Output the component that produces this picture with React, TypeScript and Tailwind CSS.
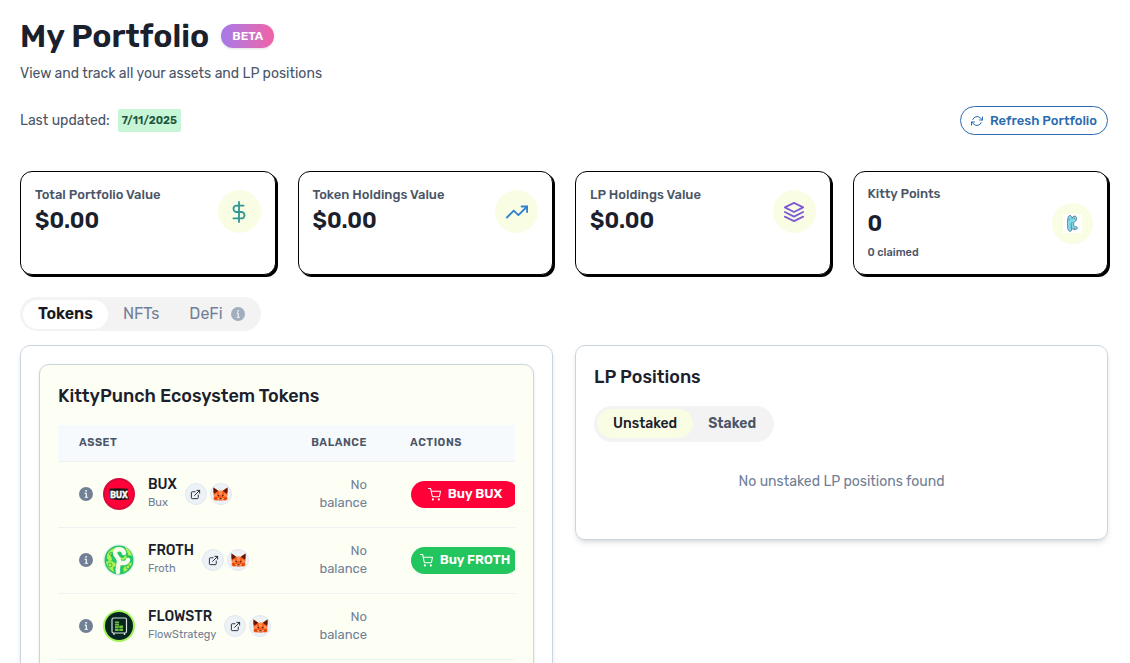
import { useState } from "react";
import type { ReactNode } from "react";
import {
  FiDollarSign,
  FiExternalLink,
  FiLayers,
  FiRefreshCw,
  FiShoppingCart,
  FiTrendingUp,
} from "react-icons/fi";

type Token = {
  symbol: string;
  name: string;
  logo: ReactNode;
  buyClass?: string;
};

type StatProps = {
  label: string;
  value: string;
  children: ReactNode;
};

function InfoIcon({ className }: { className: string }) {
  return (
    <svg viewBox="0 0 24 24" className={className} aria-hidden="true">
      <path
        fill="currentColor"
        d="M12,0A12,12,0,1,0,24,12,12.013,12.013,0,0,0,12,0Zm.25,5a1.5,1.5,0,1,1-1.5,1.5A1.5,1.5,0,0,1,12.25,5ZM14.5,18.5h-4a1,1,0,0,1,0-2h.75a.25.25,0,0,0,.25-.25v-4.5a.25.25,0,0,0-.25-.25H10.5a1,1,0,0,1,0-2h1a2,2,0,0,1,2,2v4.75a.25.25,0,0,0,.25.25h.75a1,1,0,1,1,0,2Z"
      />
    </svg>
  );
}

function FoxIcon() {
  return (
    <svg viewBox="0 0 32 30" className="w-[15px] shrink-0" aria-hidden="true">
      <path fill="#ff5c16" d="M1 1l10 7h10l10-7v14l-1 5 1 6-5 3-6-1-2 2h-4l-2-2-6 1-5-3 1-6-1-5z" />
      <path fill="#661800" d="M1 1l10 7-4 3-4 3-2-3zM31 1L21 8l4 3 4 3 2-3z" />
      <path fill="#ff8d5d" d="M12 8h8l-1 9h-6zM2 17l6-4 3 7-9 1zM30 17l-6-4-3 7 9 1z" />
      <path fill="#e34807" d="M2 22h9l1 4-8 2zM30 22h-9l-1 4 8 2z" />
      <path fill="#33180c" d="M9 16l4 2-1 2-2-1zM23 16l-4 2 1 2 2-1zM15 24h2l1 2h-4z" />
      <path fill="#f3e4de" d="M9 23l3 1v3l-2-1zM23 23l-3 1v3l2-1zM13 27h6l-1 2h-4z" />
    </svg>
  );
}

function KittyIcon() {
  return (
    <svg viewBox="0 0 19 19" className="size-[19px]" aria-hidden="true">
      <path fill="#fff" d="M0 0h19v19H0z" />
      <path
        fill="#7fd8ec"
        stroke="#52707d"
        strokeWidth=".8"
        d="M7.200 1.500C5.200 1.300 4.500 4 4.500 9.500S5 17.500 7.400 17.300C9 17 8.600 15.500 8.600 14c1.200 1.400 2.600 1.800 4.300 1.400 1.600-.4 2-1.800.8-2.600-1.800.2-3.200-.8-3.200-2.800.2-2.400 3.300-2.900 3.200-5.600-.1-1.700-1.400-2.700-2.700-2.300-1.100.3-1.500 1.400-2 2.300C8.900 3 8.600 1.700 7.200 1.500z"
      />
      <path fill="none" stroke="#52707d" strokeWidth=".7" d="M5.500 5l1.500 1M8.300 14V9.500L9.500 8M10.500 14l1.500.5M10.500 4l1.500.7" />
    </svg>
  );
}

function BuxLogo() {
  return (
    <svg viewBox="0 0 32 32" className="size-8" aria-hidden="true">
      <circle cx="16" cy="16" r="16" fill="#d5093b" />
      <circle cx="16" cy="16" r="14" fill="#ff0038" />
      <path fill="#22151a" d="M6.500 10.800l8-.6 10.500.6-.6 4 1.600 6.400-9 1-9.700-1.200z" />
      <text
        x="16"
        y="19.500"
        textAnchor="middle"
        fill="#fff"
        stroke="#fff"
        strokeWidth=".4"
        className="font-['Roboto',sans-serif] text-[9px] font-bold"
      >
        BUX
      </text>
    </svg>
  );
}

function FrothLogo() {
  return (
    <svg viewBox="0 0 32 32" className="size-8" aria-hidden="true">
      <circle cx="16" cy="16" r="16" fill="#e8f3f1" />
      <circle cx="16" cy="16" r="14.500" fill="#25c667" />
      <g fill="#aef24f">
        <path d="M4 12c1-4 4-7 8-8l-1 3c-3 1-3 4-3 7l-4 1z" />
        <path d="M3 18c3-2 7-1 9 1s0 4-2 4l1 5c-4-2-7-5-8-10z" />
        <path d="M22 3c4 2 6 5 7 9l-4-1c0-3-2-4-3-8z" />
        <path d="M22 22l7-4c-1 5-4 8-8 10-1-2-1-4 1-6z" />
        <path d="M16 13l4 1 3-3 1 3-4 2-3-1z" />
        <circle cx="13" cy="5" r="1.800" />
        <circle cx="7" cy="15" r="2" />
      </g>
      <g fill="none" stroke="#25a95a" strokeWidth=".8">
        <circle cx="7" cy="21" r="2" />
        <circle cx="25" cy="23" r="2" />
        <circle cx="8" cy="10" r="1.500" />
      </g>
      <path
        fill="none"
        stroke="#f7fbe9"
        strokeWidth="4.500"
        strokeLinecap="round"
        strokeLinejoin="round"
        d="M21 9c-1-5-9-5-9 0 0 3 4 4 4 8s-2 6-1 11M16 18c4 2 8 1 9-2"
      />
    </svg>
  );
}

function FlowLogo() {
  return (
    <svg viewBox="0 0 32 32" className="size-8" aria-hidden="true">
      <circle cx="16" cy="16" r="16" fill="#a4f35a" />
      <circle cx="16" cy="16" r="14" fill="#06261f" />
      <rect x="9" y="8" width="14.500" height="15" rx="1.500" fill="none" stroke="#d8e0dc" strokeWidth="1.200" />
      <path stroke="#d8e0dc" strokeWidth="1.300" d="M11 23v2M21.500 23v2" />
      <path fill="#6fbf3f" d="M12 11.500h4v4h4v5.500h-8z" />
      <path stroke="#06261f" strokeWidth=".6" d="M12 13.500h4M12 15.800h5M12 18.500h9M16 17v4" />
    </svg>
  );
}

const tokens: Token[] = [
  { symbol: "BUX", name: "Bux", logo: <BuxLogo />, buyClass: "bg-[#ff0038]" },
  { symbol: "FROTH", name: "Froth", logo: <FrothLogo />, buyClass: "bg-[#22c55e]" },
  { symbol: "FLOWSTR", name: "FlowStrategy", logo: <FlowLogo /> },
];

function StatCard({ label, value, children }: StatProps) {
  return (
    <div className="flex items-start justify-between rounded-xl border border-black bg-white px-[14px] pt-[14px] pb-9 shadow-[2px_2px_0_#000]">
      <div>
        <p className="text-[13px] leading-[18px] font-medium text-[#4a5568]">{label}</p>
        <p className="text-[22px] leading-[34px] font-semibold text-[#1a202c]">{value}</p>
      </div>
      <div className="mt-1 flex size-[43px] items-center justify-center rounded-full bg-[#f8fde4]">
        {children}
      </div>
    </div>
  );
}

function TokenRow({ token }: { token: Token }) {
  return (
    <tr className="h-[66px] border-b border-[#edf2f7]">
      <td className="pl-[21px]">
        <div className="flex items-center">
          <InfoIcon className="mr-[10px] size-[14px] text-[#718096]" />
          <span className="mr-[13px] rounded-full">{token.logo}</span>
          <div className="mr-2">
            <p className="text-[14px] leading-[18px] font-medium text-[#1a202c]">{token.symbol}</p>
            <p className="text-[11px] leading-[18px] text-[#718096]">{token.name}</p>
          </div>
          <a
            href="#"
            aria-label={`Open ${token.name}`}
            className="mr-[3px] flex size-[22px] items-center justify-center rounded-full border border-[#e2e8f0] bg-[#edf2f7] text-[#1a202c]"
          >
            <FiExternalLink className="size-[11px]" />
          </a>
          <button
            aria-label={`Add ${token.symbol} to wallet`}
            className="flex size-[22px] items-center justify-center rounded-full border border-[#e2e8f0] bg-[#edf2f7]"
          >
            <FoxIcon />
          </button>
        </div>
      </td>
      <td className="px-[21px] text-right text-[13px] leading-[18px] text-[#718096]">No balance</td>
      <td className="pl-[23px]">
        {token.buyClass && (
          <button
            className={`${token.buyClass} flex h-[27px] w-[108px] items-center justify-center gap-[7px] rounded-full text-[13px] font-semibold text-white`}
          >
            <FiShoppingCart className="size-[13px]" />
            Buy {token.symbol}
          </button>
        )}
      </td>
    </tr>
  );
}

function App() {
  const [tab, setTab] = useState<string>("Tokens");
  const [lpTab, setLpTab] = useState<string>("Unstaked");

  return (
    <main className="bg-white pt-[14px] pr-[22px] pb-10 pl-5 font-['Rubik','Roboto',sans-serif] text-[#1a202c]">
      <header>
        <div className="flex items-center gap-3">
          <h1 className="text-[32px] leading-[44px] font-semibold">My Portfolio</h1>
          <span className="rounded-full bg-linear-to-r from-[#a578e8] to-[#f062a6] px-[11px] text-[12px] leading-6 font-semibold text-white shadow-sm">
            BETA
          </span>
        </div>
        <p className="mt-1 text-[14px] leading-6 text-[#4a5568]">
          View and track all your assets and LP positions
        </p>
      </header>

      <div className="mt-5 flex items-center justify-between">
        <p className="flex items-center gap-2 text-[14px] text-[#4a5568]">
          Last updated:
          <span className="rounded-xs bg-[#c6f6d5] px-1 text-[11px] leading-[23px] font-semibold text-[#22543d]">
            7/11/2025
          </span>
        </p>
        <button className="flex h-[29px] items-center gap-[7px] rounded-full border border-[#2b6cb0] px-[10px] text-[13px] font-medium text-[#2b6cb0]">
          <FiRefreshCw className="size-3" />
          Refresh Portfolio
        </button>
      </div>

      <section className="mt-9 grid grid-cols-4 gap-[22px]">
        <StatCard label="Total Portfolio Value" value="$0.00">
          <FiDollarSign className="size-[22px] text-[#319795]" />
        </StatCard>
        <StatCard label="Token Holdings Value" value="$0.00">
          <FiTrendingUp className="size-[22px] text-[#3182ce]" />
        </StatCard>
        <StatCard label="LP Holdings Value" value="$0.00">
          <FiLayers className="size-[22px] text-[#805ad5]" />
        </StatCard>
        <div className="flex items-center justify-between rounded-xl border border-black bg-white px-[14px] shadow-[2px_2px_0_#000]">
          <div>
            <p className="text-[13px] leading-[18px] font-medium text-[#4a5568]">Kitty Points</p>
            <p className="my-1 text-[22px] leading-[34px] font-semibold">0</p>
            <p className="text-[11px] leading-4 font-medium text-[#4a5568]">0 claimed</p>
          </div>
          <div className="flex size-[41px] items-center justify-center rounded-full bg-[#f8fde4]">
            <KittyIcon />
          </div>
        </div>
      </section>

      <nav className="mt-[22px] flex h-[34px] w-fit items-center rounded-full bg-[#f3f3f3] py-[3px] pr-px pl-[3px] text-[16px]">
        {["Tokens", "NFTs", "DeFi"].map((name) => (
          <button
            key={name}
            onClick={() => setTab(name)}
            className={
              tab === name
                ? "flex h-[29px] items-center rounded-full bg-white px-[15px] font-semibold text-[#171923]"
                : "flex h-[29px] items-center gap-2 rounded-full px-[15px] text-[#718096]"
            }
          >
            {name}
            {name === "DeFi" && <InfoIcon className="size-[14px] text-[#a0aec0]" />}
          </button>
        ))}
      </nav>

      <div className="mt-[14px] grid grid-cols-2 items-start gap-[22px]">
        <section className="rounded-[10px] border border-[#cbd5e0] p-[18px] shadow-md">
          <div className="rounded-[10px] border border-[#cbd5e0] bg-[#fdfff5] px-[18px] pt-[18px] pb-6 shadow-sm">
            <h2 className="text-[18px] leading-[26px] font-medium">KittyPunch Ecosystem Tokens</h2>
            <div className="mt-4 overflow-hidden">
              <table className="w-[484px] table-fixed">
                <thead>
                  <tr className="h-[36px] border-b border-[#edf2f7] bg-[#f7fafc] text-[11px] tracking-wider text-[#4a5568]">
                    <th className="w-[232px] pl-[21px] text-left font-semibold">ASSET</th>
                    <th className="w-[98px] pr-[21px] text-right font-semibold">BALANCE</th>
                    <th className="pl-[22px] text-left font-semibold">ACTIONS</th>
                  </tr>
                </thead>
                <tbody>
                  {tokens.map((token) => (
                    <TokenRow key={token.symbol} token={token} />
                  ))}
                </tbody>
              </table>
            </div>
          </div>
        </section>

        <section className="rounded-[10px] border border-[#cbd5e0] px-[18px] pt-[18px] pb-[46px] shadow-md">
          <h2 className="text-[18px] leading-[26px] font-medium">LP Positions</h2>
          <div className="mt-4 flex h-9 w-fit items-start rounded-full bg-[#f3f3f3] p-[3px] text-[14px] font-medium">
            {["Unstaked", "Staked"].map((name) => (
              <button
                key={name}
                onClick={() => setLpTab(name)}
                className={
                  lpTab === name
                    ? "h-[29px] rounded-full bg-[#f8fde4] px-4 text-[#1a202c]"
                    : "h-[29px] rounded-full px-[15px] font-semibold text-[#4a5568]"
                }
              >
                {name}
              </button>
            ))}
          </div>
          <p className="mt-[29px] text-center text-[14px] leading-[22px] text-[#718096]">
            No unstaked LP positions found
          </p>
        </section>
      </div>
    </main>
  );
}

export default App;
